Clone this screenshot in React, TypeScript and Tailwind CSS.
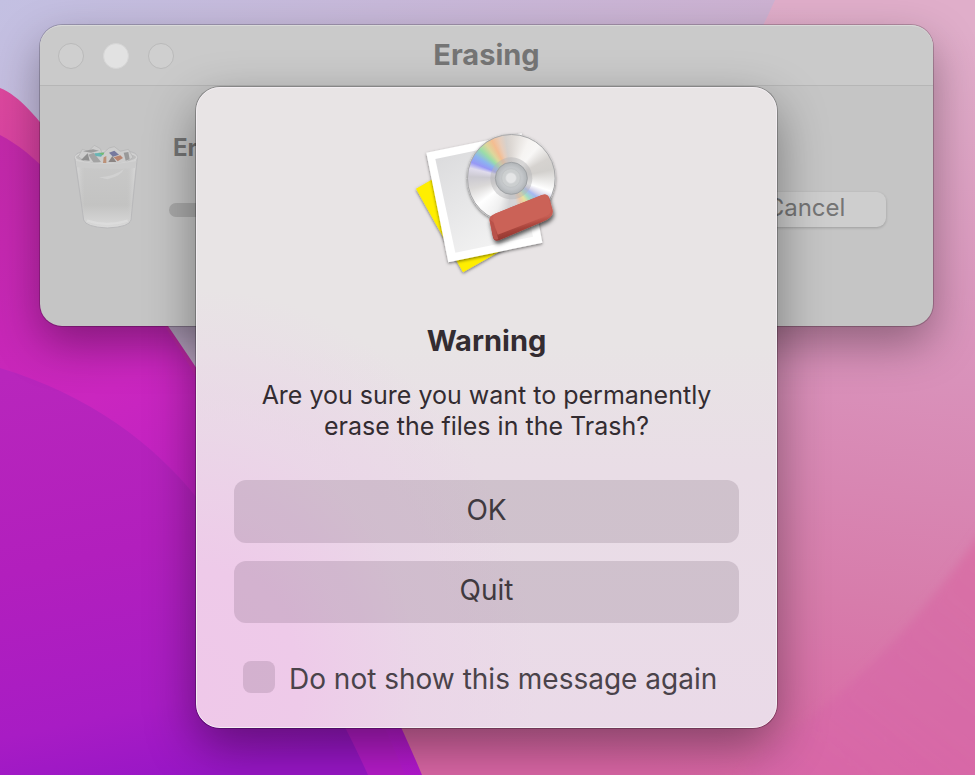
import { useState } from 'react';

function Wallpaper() {
  return (
    <svg className="absolute inset-0 h-full w-full" viewBox="0 0 975 775" preserveAspectRatio="none" aria-hidden="true">
      <defs>
        <linearGradient id="sky" x1="0" y1="0" x2="1" y2="1">
          <stop offset="0" stopColor="#c3c0e2" />
          <stop offset="0.4" stopColor="#cdb2d2" />
          <stop offset="1" stopColor="#d772ac" />
        </linearGradient>
        <linearGradient id="pink" x1="0.6" y1="0" x2="0.5" y2="1">
          <stop offset="0" stopColor="#e0aeca" />
          <stop offset="0.45" stopColor="#d991ba" />
          <stop offset="0.75" stopColor="#d77cab" />
          <stop offset="1" stopColor="#da66a5" />
        </linearGradient>
        <linearGradient id="corner" gradientUnits="userSpaceOnUse" x1="975" y1="540" x2="800" y2="760">
          <stop offset="0" stopColor="#d96ba2" stopOpacity="0.75" />
          <stop offset="0.5" stopColor="#d666a6" stopOpacity="0.6" />
          <stop offset="1" stopColor="#d765a9" stopOpacity="0.5" />
        </linearGradient>
        <linearGradient id="rose" gradientUnits="userSpaceOnUse" x1="0" y1="88" x2="420" y2="775">
          <stop offset="0" stopColor="#dc489d" />
          <stop offset="0.4" stopColor="#cc2cb4" />
          <stop offset="1" stopColor="#b318cf" />
        </linearGradient>
        <linearGradient id="magenta" gradientUnits="userSpaceOnUse" x1="0" y1="135" x2="260" y2="620">
          <stop offset="0" stopColor="#c229a8" />
          <stop offset="0.5" stopColor="#ca26bf" />
          <stop offset="1" stopColor="#b41bc8" />
        </linearGradient>
        <linearGradient id="violet" gradientUnits="userSpaceOnUse" x1="40" y1="368" x2="130" y2="790">
          <stop offset="0" stopColor="#b826bc" />
          <stop offset="0.45" stopColor="#b21fbd" />
          <stop offset="0.82" stopColor="#a81cc4" />
          <stop offset="1" stopColor="#9816c6" />
        </linearGradient>
        <filter id="soft" x="-10%" y="-10%" width="120%" height="120%">
          <feGaussianBlur stdDeviation="5" />
        </filter>
      </defs>
      <rect width="975" height="775" fill="url(#sky)" />
      <path d="M775 0C740 80 640 250 380 480L390 775H975V0Z" fill="url(#pink)" />
      <path d="M1000 505C935 600 880 665 800 725C760 750 740 770 730 800H1000Z" fill="url(#corner)" filter="url(#soft)" />
      <path d="M0 88C50 108 100 225 168 326C260 460 360 625 422 775H0Z" fill="url(#rose)" />
      <path d="M0 135C50 160 110 240 180 350C270 500 350 640 405 775H0Z" fill="url(#magenta)" />
      <path d="M0 368C90 395 155 445 197 498C270 590 330 690 368 775H0Z" fill="url(#violet)" />
    </svg>
  );
}

function TrashIcon() {
  return (
    <svg className="h-[92px] w-[66px] shrink-0" viewBox="42 30 198 276" aria-hidden="true">
      <defs>
        <linearGradient id="bin" x1="0" y1="0" x2="0" y2="1">
          <stop offset="0" stopColor="#cacaca" />
          <stop offset="0.7" stopColor="#c3c3c2" />
          <stop offset="1" stopColor="#dadada" />
        </linearGradient>
        <linearGradient id="binSide" x1="0" y1="0" x2="1" y2="0">
          <stop offset="0" stopColor="#dadada" />
          <stop offset="0.15" stopColor="#cccccc" stopOpacity="0" />
          <stop offset="0.85" stopColor="#cccccc" stopOpacity="0" />
          <stop offset="1" stopColor="#dadada" />
        </linearGradient>
      </defs>
      <path d="M47 82Q50 66 80 64H205Q235 66 235 82L216 270Q212 291 145 294Q80 291 74 270Z" fill="url(#bin)" stroke="#b9b9bb" strokeWidth="3" />
      <path d="M50 82L76 268Q80 288 145 291Q210 288 214 268L232 82Z" fill="url(#binSide)" />
      <ellipse cx="141" cy="82" rx="92" ry="19" fill="#bdbdbd" stroke="#d2d2d2" strokeWidth="4" />
      <path d="M58 80L70 58L88 64L106 46L124 56L130 72L150 54L166 50L184 64L208 58L222 82L200 98L142 102L80 96Z" fill="#cdcdcd" stroke="#b2b2b2" strokeWidth="2" />
      <path d="M66 90L86 70L92 92Z" fill="#8f8f8f" />
      <path d="M88 74L104 68L126 96L104 98Z" fill="#a3a3a3" />
      <path d="M106 70L136 68L126 80L110 78Z" fill="#68b4b4" />
      <path d="M118 68L136 68L132 76Z" fill="#72bb74" />
      <path d="M150 68L166 62L180 74L162 80Z" fill="#76799e" />
      <path d="M148 96L160 78L172 96Z" fill="#8b8584" />
      <path d="M134 82L142 78L142 100L132 100Z" fill="#bc9178" />
      <path d="M164 82L184 76L192 84L176 94Z" fill="#b88470" />
      <path d="M194 68L208 66L212 88L200 92Z" fill="#999999" />
      <path d="M72 64L102 58L120 62L96 68Z" fill="#9c9c9c" />
      <path d="M51 92Q140 109 232 92L229 114Q140 120 54 112Z" fill="#cbcbcb" />
      <path d="M52 92Q140 110 231 92" fill="none" stroke="#d3d3d3" strokeWidth="3" />
      <path d="M120 142Q165 140 194 118Q188 138 145 148Z" fill="#d1d1d1" />
      <path d="M84 272Q145 292 206 272" fill="none" stroke="#dedede" strokeWidth="7" opacity="0.7" />
    </svg>
  );
}

function EraserIcon() {
  return (
    <svg className="h-[165px] w-[180px]" viewBox="-10 0 540 495" aria-hidden="true">
      <defs>
        <linearGradient id="photo" x1="0" y1="0" x2="0.6" y2="1">
          <stop offset="0" stopColor="#d9d9db" />
          <stop offset="1" stopColor="#f3f3f3" />
        </linearGradient>
        <linearGradient id="rubber" x1="0.3" y1="0" x2="0.6" y2="1">
          <stop offset="0" stopColor="#c95c50" />
          <stop offset="0.6" stopColor="#c65d53" />
          <stop offset="0.72" stopColor="#a8443b" />
          <stop offset="1" stopColor="#822c27" />
        </linearGradient>
        <radialGradient id="hub">
          <stop offset="0" stopColor="#d2d5d7" />
          <stop offset="0.7" stopColor="#c3c6c9" />
          <stop offset="1" stopColor="#b0b4b7" />
        </radialGradient>
        <filter id="drop" x="-20%" y="-20%" width="140%" height="150%">
          <feDropShadow dx="0" dy="4" stdDeviation="5" floodColor="#000000" floodOpacity="0.5" />
        </filter>
        <filter id="dropDeep" x="-20%" y="-20%" width="140%" height="160%">
          <feDropShadow dx="3" dy="9" stdDeviation="7" floodColor="#000000" floodOpacity="0.65" />
        </filter>
      </defs>
      <path d="M47 206L190 124L330 376L188 457Z" fill="#ffee00" filter="url(#drop)" />
      <path d="M78 98L364 40L426 368L144 427Z" fill="#ffffff" filter="url(#drop)" />
      <path d="M105 117L342 68L398 350L165 398Z" fill="url(#photo)" />
      <circle cx="333" cy="175" r="133" fill="#d4d4d4" filter="url(#drop)" />
      <foreignObject x="200" y="42" width="266" height="266">
        <div className="h-[266px] w-[266px] rounded-full border-[3px] border-[#a8a8aa] bg-[conic-gradient(from_0deg,#ddd8d4_0deg,#f6f4f2_25deg,#f8f7f6_40deg,#d6d3d0_62deg,#d2d0cd_78deg,#ffffff_108deg,#d7d5ea_119deg,#a6b8f0_126deg,#a0dcc8_138deg,#e8e2a0_148deg,#f0c8a8_158deg,#d6d4d6_170deg,#d4d4d6_185deg,#f0f0f0_205deg,#ffffff_232deg,#dbd9d8_255deg,#cbc9d0_272deg,#e0dcec_284deg,#9798f6_292deg,#8cb4f0_302deg,#9bdda8_313deg,#dcd79c_323deg,#f4bd91_333deg,#e8cdba_343deg,#d6d1cd_352deg,#ddd8d4_360deg)]" />
      </foreignObject>
      <circle cx="333" cy="175" r="63" fill="#b5b5b8" opacity="0.5" />
      <circle cx="333" cy="175" r="48" fill="url(#hub)" stroke="#9fa2a5" strokeWidth="3" />
      <circle cx="332" cy="174" r="28" fill="#cccfd0" stroke="#bcbfc1" strokeWidth="2" />
      <circle cx="332" cy="174" r="16" fill="#e4e5e6" stroke="#d6d8d9" strokeWidth="2" />
      <path d="M284 281L425 225Q442 219 447 234L457 270Q460 284 448 293Q440 300 425 306L298 360Q282 367 278 352L267 300Q267 287 284 281Z" fill="url(#rubber)" filter="url(#dropDeep)" />
      <path d="M268 298L280 308L294 357Q282 364 278 350Z" fill="#b9524a" />
      <path d="M284 281L425 225Q440 220 445 233L453 269Q450 283 437 288L292 344L281 308Q274 290 284 281Z" fill="#cb6257" />
    </svg>
  );
}

function ErasingWindow() {
  return (
    <section
      aria-label="Erasing"
      className="relative mt-[25px] mr-[42px] ml-10 rounded-[22px] bg-[#c5c5c5] pb-[94px] shadow-[0_0_0_1px_rgba(0,0,0,0.2),0_18px_45px_rgba(0,0,0,0.34)]"
    >
      <header className="grid h-[61px] grid-cols-[1fr_auto_1fr] items-center rounded-t-[22px] border-t border-b border-t-[#dadada] border-b-[#b6b6b6] bg-[#cacaca] px-[18px]">
        <div className="flex gap-[19px]">
          <button type="button" aria-label="Close" className="h-[26px] w-[26px] rounded-full border border-[#bababa] bg-[#cfcfcf]" />
          <button type="button" aria-label="Minimize" className="h-[26px] w-[26px] rounded-full border border-[#d6d6d6] bg-[#e2e2e2]" />
          <button type="button" aria-label="Zoom" className="h-[26px] w-[26px] rounded-full border border-[#bababa] bg-[#cfcfcf]" />
        </div>
        <h1 className="pb-0.5 text-[29px] leading-8 font-bold text-[#757575]">Erasing</h1>
      </header>
      <div className="flex items-start pt-[54px] pr-[47px] pl-[33px]">
        <TrashIcon />
        <div className="ml-[30px] flex-1">
          <p className="pl-1 text-2xl leading-4 font-bold text-[#747474]">Erasing</p>
          <div className="mt-[47px] h-3.5 rounded-full bg-[#a9a9a9]" />
        </div>
        <button
          type="button"
          className="mt-[52px] ml-5 h-[35px] w-[160px] rounded-[9px] bg-[#cecece] pb-1 text-2xl leading-7 text-[#757575] shadow-[0_1px_3px_rgba(0,0,0,0.2)]"
        >
          Cancel
        </button>
      </div>
    </section>
  );
}

function WarningDialog() {
  const [hideNextTime, setHideNextTime] = useState(false);

  return (
    <div
      role="alertdialog"
      aria-labelledby="warning-title"
      aria-describedby="warning-text"
      className="flex w-[581px] flex-col items-center rounded-[24px] border border-[#f3eef2] bg-[radial-gradient(ellipse_340px_400px_at_0%_94%,#efc8e9_0%,#eecae9_30%,rgba(235,212,232,0.7)_65%,rgba(234,218,230,0)_100%),linear-gradient(to_bottom,#e8e4e5_0%,#e8e4e5_40%,#e9dde6_60%,#eadae8_100%)] px-[37px] pt-8 pb-[34px] shadow-[0_0_0_1px_rgba(0,0,0,0.25),0_18px_50px_rgba(0,0,0,0.4)]"
    >
      <EraserIcon />
      <h2 id="warning-title" className="mt-10 text-[29px] leading-8 font-bold text-[#332c31]">
        Warning
      </h2>
      <p id="warning-text" className="mt-[23px] w-[480px] text-center text-[25px] leading-[31px] text-[#332c31]">
        Are you sure you want to permanently erase the files in the Trash?
      </p>
      <div className="mt-[38px] flex w-full flex-col gap-[18px]">
        <button type="button" className="h-[63px] rounded-[12px] bg-[#3c283c]/15 pb-1 text-[28px] text-[#403a3f]">
          OK
        </button>
        <button type="button" className="h-[62px] rounded-[12px] bg-[#3c283c]/15 pb-1 text-[28px] text-[#403a3f]">
          Quit
        </button>
      </div>
      <div className="mt-[38px] flex items-start gap-3.5 self-start pl-[9px]">
        <input
          id="hide-next-time"
          type="checkbox"
          checked={hideNextTime}
          onChange={(e) => setHideNextTime(e.target.checked)}
          className="h-8 w-8 appearance-none rounded-[8px] bg-[#3c283c]/15 checked:bg-[#3c283c]/50"
        />
        <label htmlFor="hide-next-time" className="h-8 text-[28px] leading-9 whitespace-nowrap text-[#4a434a]">
          Do not show this message again
        </label>
      </div>
    </div>
  );
}

export default function App() {
  return (
    <div className="min-h-screen bg-white pr-0.5 font-['Inter','Liberation_Sans',sans-serif]">
      <main className="relative flow-root min-h-screen overflow-hidden">
        <Wallpaper />
        <ErasingWindow />
        {/* Modal sits over the window behind it */}
        <div className="absolute inset-x-0 top-[87px] flex justify-center pr-0.5">
          <WarningDialog />
        </div>
      </main>
    </div>
  );
}
